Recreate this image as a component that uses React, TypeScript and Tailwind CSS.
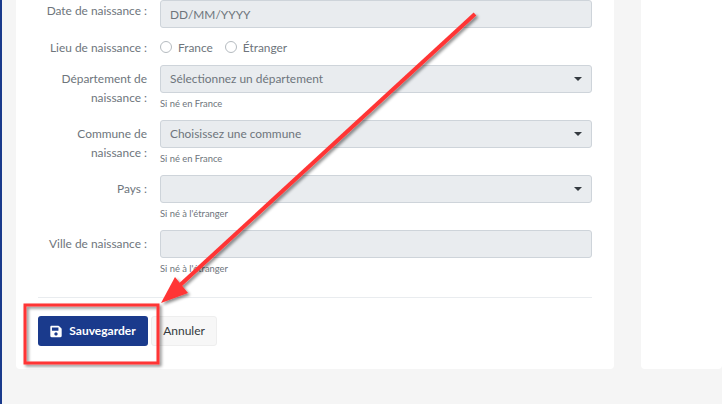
function Caret() {
  return <span className="ml-auto h-0 w-0 border-l-[4px] border-r-[4px] border-t-[4px] border-l-transparent border-r-transparent border-t-[#343a40]" />;
}

function Field({ text, caret, className }: { text?: string; caret?: boolean; className?: string }) {
  return (
    <div className={`flex h-[28px] w-[432px] items-center rounded-[3px] border border-[#ced4da] bg-[#e9ecef] pl-[9px] pr-[9px] text-[11.9px] text-[#6e757c] ${className ?? ""}`}>
      <span>{text}</span>
      {caret && <Caret />}
    </div>
  );
}

function Row({ label, text, caret, hint, className, labelClass, fieldClass }: { label: React.ReactNode; text?: string; caret?: boolean; hint?: string; className?: string; labelClass?: string; fieldClass?: string }) {
  return (
    <div className={`flex gap-[13px] ${className ?? ""}`}>
      <div className={`w-[109px] whitespace-nowrap text-right text-[11.9px] leading-[19px] text-[#6e757c] ${labelClass ?? "pt-[4px]"}`}>{label}</div>
      <div className="flex flex-col">
        <Field text={text} caret={caret} className={fieldClass} />
        {hint && <div className="mt-[5px] h-[12px] text-[9.4px] leading-[12px] text-[#6e757c]">{hint}</div>}
      </div>
    </div>
  );
}

function Radio({ label }: { label: string }) {
  return (
    <span className="flex items-center gap-[6px]">
      <span className="h-[12px] w-[12px] rounded-full border border-[#b5bbc0] bg-white" />
      <span>{label}</span>
    </span>
  );
}

export default function App() {
  return (
    <div className="relative flex h-[404px] w-[722px] overflow-hidden bg-[#f5f5f5] font-['Lato',sans-serif]">
      <div className="h-full w-[2px] bg-[#1a3a8c]" />
      <div className="ml-[14px] h-[369px] w-[598px] rounded-b-[4px] bg-white px-[22px]">
        <Row label="Date de naissance :" text="DD/MM/YYYY" labelClass="pt-px" fieldClass="pt-[2px]" />
        <div className="mt-[10px] flex h-[19px] items-center gap-[13px] whitespace-nowrap text-[11.9px] text-[#6e757c]">
          <div className="w-[109px] text-right">Lieu de naissance :</div>
          <div className="flex gap-[12px]">
            <Radio label="France" />
            <Radio label="Étranger" />
          </div>
        </div>
        <Row className="mt-[8px]" label={<>Département de<br />naissance :</>} text="Sélectionnez un département" caret hint="Si né en France" />
        <Row className="mt-[10px]" label={<>Commune de<br />naissance :</>} text="Choisissez une commune" caret hint="Si né en France" />
        <Row className="mt-[10px]" label="Pays :" caret hint="Si né à l'étranger" />
        <Row className="mt-[10px]" label="Ville de naissance :" hint="Si né à l'étranger" />
        <div className="mt-[22px] h-px bg-[#e9ecef]" />
        <div className="mt-[18px] flex gap-[3px]">
          <button className="flex h-[30px] w-[110px] items-center justify-center gap-[7px] rounded-[3px] bg-[#1a3a8c] text-[12px] font-bold text-white">
            <svg width="12" height="13" viewBox="0 0 448 512" fill="currentColor">
              <path d="M433.9 129.9l-83.9-83.9A48 48 0 0 0 316.1 32H48C21.5 32 0 53.5 0 80v352c0 26.5 21.5 48 48 48h352c26.5 0 48-21.5 48-48V163.9a48 48 0 0 0-14.1-34zM224 416c-35.3 0-64-28.7-64-64 0-35.3 28.7-64 64-64s64 28.7 64 64c0 35.3-28.7 64-64 64zm96-304.5V212c0 6.6-5.4 12-12 12H76c-6.6 0-12-5.4-12-12V108c0-6.6 5.4-12 12-12h228.5c3.2 0 6.2 1.3 8.5 3.5l3.5 3.5c2.3 2.3 3.5 5.3 3.5 8.5z" />
            </svg>
            Sauvegarder
          </button>
          <button className="h-[30px] w-[66px] rounded-[3px] border border-[#eeeeee] bg-[#f7f7f7] text-[12px] text-[#343a40]">Annuler</button>
        </div>
      </div>
      <div className="ml-[27px] h-[369px] flex-1 rounded-b-[4px] bg-white" />

      <svg className="absolute left-0 top-0" width="722" height="404" viewBox="0 0 722 404">
        <defs>
          <filter id="s" x="-20%" y="-20%" width="140%" height="140%">
            <feDropShadow dx="2" dy="2" stdDeviation="1.5" floodColor="#000" floodOpacity="0.45" />
          </filter>
        </defs>
        <g filter="url(#s)">
          <path d="M475 14 L178 287" stroke="#ff3535" strokeWidth="4" fill="none" />
          <path d="M161 303 L175 277 L188 293 Z" fill="#ff3535" />
          <rect x="25" y="305" width="133" height="58" fill="none" stroke="#ff3535" strokeWidth="3" />
        </g>
      </svg>
    </div>
  );
}
